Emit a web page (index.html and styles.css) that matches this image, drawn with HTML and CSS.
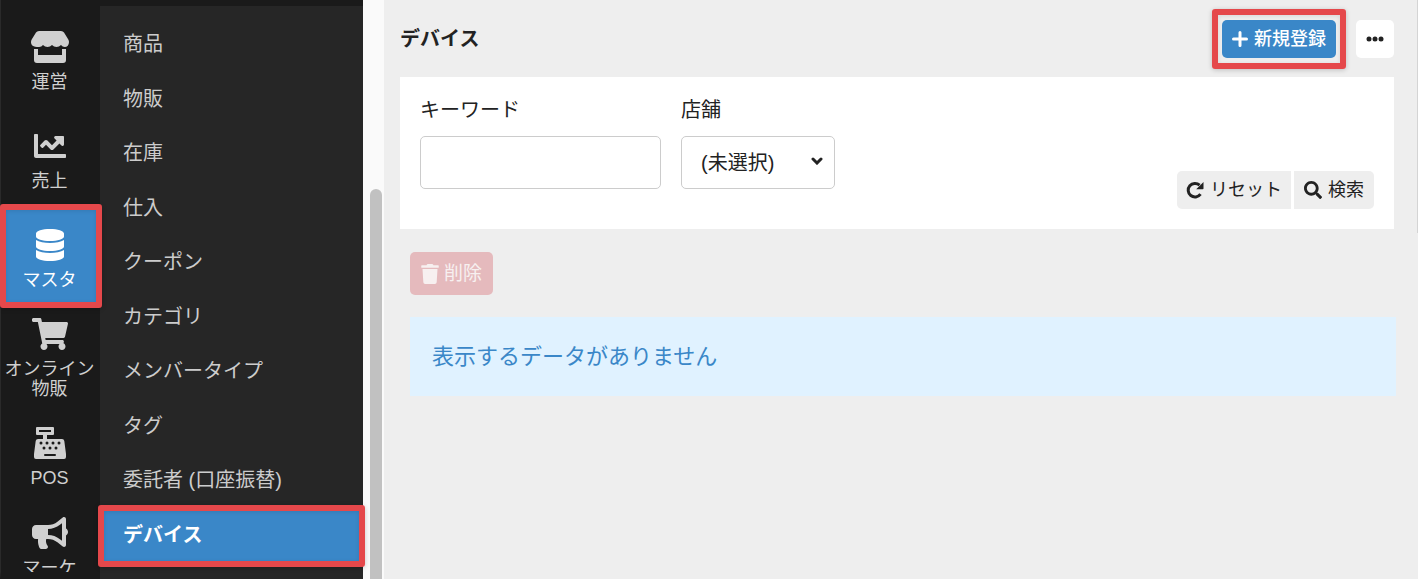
FILE: index.html
```html
<!DOCTYPE html>
<html lang="ja">
<head>
  <meta charset="UTF-8" />
  <meta name="viewport" content="width=device-width, initial-scale=1.0" />
  <title>デバイス</title>
  <link rel="stylesheet" href="styles.css">
</head>
<body>
  <nav class="rail">
    <a href="#" class="rail-item">
      <svg class="rail-icon" width="38" height="32" viewBox="0 0 38 32"><path d="M8 0h22q2 0 3 1.500l4.300 7q.700 1.200.700 2.500c0 3-1.800 5-4.200 5q-2.300 0-3.800-2-1.800 2-4.500 2t-4.500-2q-1.800 2-4.500 2t-4.500-2q-1.500 2-3.800 2C1.800 16 0 14 0 11q0-1.300.700-2.500l4.300-7Q6 0 8 0zM3 18h4v6h24v-6h4v11q0 3-3 3H6q-3 0-3-3z"/></svg>
      <span>運営</span>
    </a>
    <a href="#" class="rail-item">
      <svg class="rail-icon" width="32" height="32" viewBox="0 0 512 512"><path d="M496 384H64V80c0-8.840-7.160-16-16-16H16C7.160 64 0 71.160 0 80v336c0 17.670 14.330 32 32 32h464c8.840 0 16-7.160 16-16v-32c0-8.840-7.160-16-16-16zM464 96H345.940c-21.380 0-32.090 25.850-16.970 40.970l32.400 32.400L288 242.750l-73.370-73.370c-12.500-12.500-32.760-12.500-45.250 0l-68.690 68.690c-6.250 6.250-6.250 16.380 0 22.630l22.620 22.620c6.250 6.250 16.380 6.250 22.630 0L192 237.250l73.370 73.370c12.500 12.500 32.760 12.500 45.250 0l96-96 32.400 32.400c15.120 15.120 40.970 4.410 40.970-16.970V112c.010-8.840-7.150-16-15.990-16z"/></svg>
      <span>売上</span>
    </a>
    <a href="#" class="rail-item active">
      <svg class="rail-icon" width="28" height="32" viewBox="0 0 448 512"><path d="M448 73.143v45.714C448 159.143 347.667 192 224 192S0 159.143 0 118.857V73.143C0 32.857 100.333 0 224 0s224 32.857 224 73.143zM448 176v102.857C448 319.143 347.667 352 224 352S0 319.143 0 278.857V176c48.125 33.143 136.208 48.572 224 48.572S399.874 209.143 448 176zm0 160v102.857C448 479.143 347.667 512 224 512S0 479.143 0 438.857V336c48.125 33.143 136.208 48.572 224 48.572S399.874 369.143 448 336z"/></svg>
      <span>マスタ</span>
    </a>
    <a href="#" class="rail-item">
      <svg class="rail-icon" width="36" height="32" viewBox="0 0 576 512"><path d="M528.120 301.319l47.273-208C578.806 78.301 567.391 64 551.990 64H159.208l-9.166-44.810C147.758 8.021 137.930 0 126.529 0H24C10.745 0 0 10.745 0 24v16c0 13.255 10.745 24 24 24h69.883l70.248 343.435C147.325 417.100 136 435.222 136 456c0 30.928 25.072 56 56 56s56-25.072 56-56c0-15.674-6.447-29.835-16.824-40h209.647C430.447 426.165 424 440.326 424 456c0 30.928 25.072 56 56 56s56-25.072 56-56c0-22.172-12.888-41.332-31.579-50.405l5.517-24.276c3.413-15.018-8.002-29.319-23.403-29.319H218.117l-6.545-32h293.145c11.206 0 20.920-7.754 23.403-18.681z"/></svg>
      <span>オンライン<br>物販</span>
    </a>
    <a href="#" class="rail-item">
      <svg class="rail-icon" width="32" height="32" viewBox="0 0 32 32"><path fill-rule="evenodd" d="M3 0h16q1 0 1 1v6q0 1-1 1h-6v4h15q2 0 2.300 2L32 27v3q0 2-2 2H2q-2 0-2-2v-3l1.700-13q.300-2 2.300-2h5V8H3Q2 8 2 7V1q0-1 1-1zM5 3v2h12V3zM11 27q-1 0-1 1t1 1h10q1 0 1-1t-1-1z"/><g class="keys"><circle cx="7" cy="16" r="1.500"/><circle cx="13" cy="16" r="1.500"/><circle cx="19" cy="16" r="1.500"/><circle cx="25" cy="16" r="1.500"/><circle cx="10" cy="21" r="1.500"/><circle cx="16" cy="21" r="1.500"/><circle cx="22" cy="21" r="1.500"/></g></svg>
      <span>POS</span>
    </a>
    <a href="#" class="rail-item rail-last">
      <svg class="rail-icon" width="36" height="32" viewBox="0 0 576 512"><path d="M576 240c0-23.630-12.950-44.040-32-55.120V32.010C544 23.260 537.020 0 512 0c-7.120 0-14.190 2.380-19.980 7.020l-85.030 68.030C364.280 109.190 310.660 128 256 128H64c-35.350 0-64 28.650-64 64v96c0 35.350 28.650 64 64 64h33.700c-1.390 10.480-2.180 21.140-2.180 32 0 39.770 9.260 77.350 25.560 110.940 5.190 10.690 16.520 17.060 28.400 17.060h74.280c26.050 0 41.690-29.840 25.900-50.560-16.400-21.520-26.150-48.360-26.150-77.440 0-11.110 1.620-21.790 4.410-32H256c54.660 0 108.280 18.810 150.980 52.950l85.030 68.030a32.023 32.023 0 0 0 19.980 7.020c24.920 0 32-22.780 32-32V295.130C563.050 284.040 576 263.630 576 240zm-96 141.420l-33.050-26.440C392.950 311.780 325.120 288 256 288v-96c69.120 0 136.950-23.780 190.950-66.980L480 98.580v282.840z"/></svg>
      <span>マーケ</span>
    </a>
  </nav>

  <nav class="submenu">
    <ul>
      <li><a href="#">商品</a></li>
      <li><a href="#">物販</a></li>
      <li><a href="#">在庫</a></li>
      <li><a href="#">仕入</a></li>
      <li><a href="#">クーポン</a></li>
      <li><a href="#">カテゴリ</a></li>
      <li><a href="#">メンバータイプ</a></li>
      <li><a href="#">タグ</a></li>
      <li><a href="#">委託者 (口座振替)</a></li>
      <li><a href="#" class="active">デバイス</a></li>
    </ul>
  </nav>

  <div class="scroll-track"><div class="scroll-thumb"></div></div>

  <main>
    <header>
      <h1>デバイス</h1>
      <div class="header-buttons">
        <button class="btn btn-primary">
          <svg width="16" height="16" viewBox="0 0 16 16"><path d="M8 1.500v13M1.500 8h13" fill="none" stroke="currentColor" stroke-width="3" stroke-linecap="round"/></svg>
          <span>新規登録</span>
        </button>
        <button class="btn btn-more" aria-label="メニュー">
          <svg width="18" height="6" viewBox="0 0 18 6"><circle cx="3" cy="3" r="2.500"/><circle cx="9" cy="3" r="2.500"/><circle cx="15" cy="3" r="2.500"/></svg>
        </button>
      </div>
    </header>

    <form class="search-box">
      <div class="field keyword">
        <label for="keyword">キーワード</label>
        <input type="text" id="keyword" />
      </div>
      <div class="field shop">
        <label for="shop">店舗</label>
        <div class="select-wrap">
          <select id="shop"><option>(未選択)</option></select>
          <svg width="12" height="8" viewBox="0 0 12 8"><path d="M2 2l4 4 4-4" fill="none" stroke="currentColor" stroke-width="3" stroke-linecap="round"/></svg>
        </div>
      </div>
      <div class="search-buttons">
        <button type="reset" class="btn btn-reset">
          <svg width="18" height="18" viewBox="0 0 18 18"><path d="M14.500 13.200A6.800 6.800 0 1 1 13.600 4.200" fill="none" stroke="currentColor" stroke-width="3"/><path d="M17.500 1v6.500q0 .800-.800.800h-6.500z"/></svg>
          <span>リセット</span>
        </button>
        <button type="button" class="btn btn-search">
          <svg width="18" height="18" viewBox="0 0 512 512"><path d="M505 442.700L405.300 343c-4.500-4.500-10.600-7-17-7H372c27.600-35.300 44-79.700 44-128C416 93.100 322.900 0 208 0S0 93.100 0 208s93.100 208 208 208c48.300 0 92.700-16.400 128-44v16.300c0 6.400 2.500 12.500 7 17l99.700 99.700c9.400 9.400 24.600 9.400 33.900 0l28.300-28.300c9.400-9.400 9.400-24.600.100-34zM208 336c-70.700 0-128-57.200-128-128 0-70.700 57.200-128 128-128 70.700 0 128 57.200 128 128 0 70.700-57.200 128-128 128z"/></svg>
          <span>検索</span>
        </button>
      </div>
    </form>

    <section class="list">
      <button class="btn btn-delete" disabled>
        <svg width="18" height="20" viewBox="0 0 448 512"><path d="M432 32H312l-9.400-18.700A24 24 0 0 0 281.100 0H166.800a23.720 23.720 0 0 0-21.400 13.300L136 32H16A16 16 0 0 0 0 48v32a16 16 0 0 0 16 16h416a16 16 0 0 0 16-16V48a16 16 0 0 0-16-16zM32 128l21.200 339a48 48 0 0 0 47.900 45h245.800a48 48 0 0 0 47.900-45L416 128z"/></svg>
        <span>削除</span>
      </button>
      <p class="message">表示するデータがありません</p>
    </section>
  </main>
</body>
</html>
```
FILE: styles.css
```css
* {
  box-sizing: border-box;
}

body {
  margin: 0;
  height: 100vh;
  display: flex;
  overflow: hidden;
  font-family: "Liberation Sans", "Noto Sans CJK JP", sans-serif;
  font-size: 20px;
  color: #222;
  background-color: #eee;
}

a {
  color: inherit;
  text-decoration: none;
}

svg {
  fill: currentColor;
  flex-shrink: 0;
}

/* left icon menu */
.rail {
  width: 100px;
  flex-shrink: 0;
  padding: 10px 2px 0 0;
  background-color: #1a1a1a;
  border-left: 1px solid #2a2a2a;
  border-bottom: 7px solid #1a1a1a;
  color: #d0d0d0;
  overflow-x: visible;
  overflow-y: clip;
}

.rail-item {
  display: flex;
  flex-direction: column;
  align-items: center;
  justify-content: center;
  gap: 5px;
  height: 99px;
  font-size: 18px;
  line-height: 20px;
  text-align: center;
  white-space: nowrap;
}

.rail-icon {
  margin: 4px 0;
}

.keys {
  fill: #1a1a1a;
}

.rail-last {
  justify-content: flex-start;
  padding-top: 8px;
}

.rail-item.active,
.submenu .active {
  position: relative;
  background-color: #3a87c8;
  color: #fff;
}

/* red frames */
.rail-item.active::after,
.submenu .active::after,
.btn-primary::after {
  content: "";
  position: absolute;
  z-index: 1;
  border: 6px solid #e5484b;
  border-radius: 3px;
  box-shadow: 0 1px 5px rgba(0, 0, 0, 0.2), inset 0 1px 4px rgba(0, 0, 0, 0.1);
}

.rail-item.active::after {
  inset: -4px -4px -1px -1px;
}

.submenu {
  width: 263px;
  flex-shrink: 0;
  padding-top: 10px;
  background-color: #262626;
  border-top: 6px solid #1a1a1a;
  color: #ccc;
}

.submenu ul {
  display: grid;
  grid-auto-rows: 1fr;
  height: 545px;
  margin: 0;
  padding: 0;
  list-style: none;
}

.submenu a {
  display: flex;
  align-items: center;
  height: 100%;
  padding: 0 0 1px 23px;
}

.submenu .active {
  font-weight: bold;
}

.submenu .active::after {
  inset: -2px -2px -6px;
}

.scroll-track {
  width: 21px;
  flex-shrink: 0;
  padding: 189px 2px 0 7px;
  background-color: #fafafa;
}

.scroll-thumb {
  height: 100%;
  background-color: #c1c1c1;
  border-radius: 6px 6px 0 0;
}

main {
  flex: 1;
  min-width: 0;
  padding: 20px 24px 0 16px;
  position: relative;
}

/* page scrollbar edge */
main::after {
  content: "";
  position: absolute;
  top: 0;
  right: 0;
  width: 1px;
  height: 233px;
  background-color: #d4d4d4;
}

header {
  display: flex;
  justify-content: space-between;
  align-items: center;
  margin-bottom: 19px;
}

h1 {
  margin: 0;
  font-size: 20px;
  line-height: 30px;
}

.header-buttons {
  display: flex;
  gap: 20px;
}

.btn {
  display: flex;
  align-items: center;
  justify-content: center;
  gap: 6px;
  height: 38px;
  padding: 0 10px;
  border: none;
  border-radius: 5px;
  background-color: #eee;
  color: #222;
  font-family: inherit;
  font-size: 18px;
  white-space: nowrap;
  cursor: pointer;
}

.btn span {
  padding-bottom: 4px;
}

.btn-primary {
  position: relative;
  background-color: #3a87c8;
  color: #fff;
  font-weight: 500;
}

.btn-primary::after {
  inset: -11px -10px;
}

.btn-more {
  width: 38px;
  background-color: #fff;
}

.search-box {
  display: flex;
  gap: 20px;
  padding: 18px 20px 20px;
  background-color: #fff;
}

.field label {
  display: block;
  margin-bottom: 11px;
  line-height: 30px;
}

.keyword {
  width: 241px;
}

.shop {
  width: 154px;
}

.field input,
.field select {
  display: block;
  width: 100%;
  height: 53px;
  padding: 0 19px;
  border: 1px solid #ccc;
  border-radius: 5px;
  background-color: #fff;
  color: #222;
  font-family: inherit;
  font-size: 20px;
  appearance: none;
}

.select-wrap {
  position: relative;
  margin-bottom: 20px;
}

.select-wrap svg {
  position: absolute;
  right: 12px;
  top: 21px;
  pointer-events: none;
}

.search-buttons {
  display: flex;
  gap: 3px;
  margin-left: auto;
  align-self: flex-end;
}

.btn-reset {
  gap: 6px;
  padding: 0 9px;
  border-radius: 5px 0 0 5px;
}

.btn-search {
  border-radius: 0 5px 5px 0;
}

.list {
  margin: 23px -2px 0 10px;
}

.btn-delete {
  height: 43px;
  gap: 5px;
  padding: 0 11px;
  background-color: #e5babd;
  color: #f7f0f0;
  font-size: 19px;
  cursor: default;
}

.message {
  margin: 22px 0 0;
  padding: 24px 22px 23px;
  background-color: #e0f2ff;
  color: #3a87c8;
  font-size: 22px;
  line-height: 32px;
}
```
